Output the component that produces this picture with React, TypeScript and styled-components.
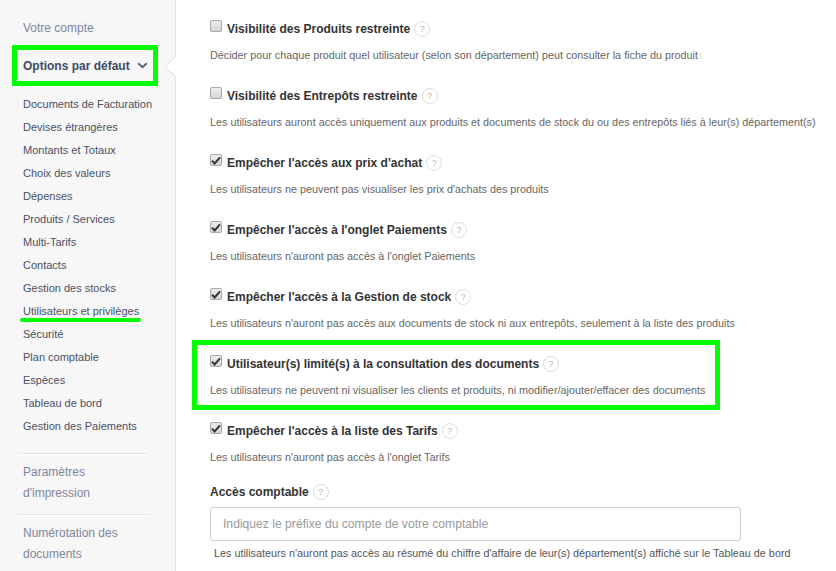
import React from 'react';
import styled, { createGlobalStyle } from 'styled-components';

const GlobalStyle = createGlobalStyle`
  html, body {
    margin: 0;
    padding: 0;
    height: 100%;
    background: #fff;
    overflow: hidden;
  }
  #root {
    height: 100%;
  }
`;

const Page = styled.div`
  display: flex;
  width: 836px;
  height: 571px;
  overflow: hidden;
  font-family: 'Liberation Sans', Arial, sans-serif;
  color: #333;
`;

const Sidebar = styled.nav`
  position: relative;
  flex: 0 0 176px;
  min-width: 0;
  box-sizing: border-box;
  padding: 18px 27px 0 18px;
  background: #f7f7f8;
  border-right: 1px solid #dfe3ea;
`;

const Notch = styled.span`
  position: absolute;
  top: 55px;
  right: -1px;
  width: 11px;
  height: 22px;
  overflow: hidden;

  &::before {
    content: '';
    position: absolute;
    top: 3px;
    left: 3px;
    width: 15px;
    height: 15px;
    background: #fff;
    border: 1px solid #dfe3ea;
    transform: rotate(45deg);
  }
`;

const SectionLink = styled.a`
  display: block;
  padding-left: 5px;
  font-size: 12px;
  line-height: 21px;
  color: #7d86a0;
`;

const ActiveSection = styled.div`
  position: relative;
  display: flex;
  align-items: center;
  gap: 7px;
  height: 41px;
  margin-top: 6px;
  padding-left: 5px;
  font-size: 12px;
  font-weight: 700;
  color: #3d4a63;
`;

const GreenBox = styled.div`
  position: absolute;
  box-sizing: border-box;
  border: 5px solid #00ff00;
  pointer-events: none;
`;

const SectionBox = styled(GreenBox)`
  top: 0;
  left: -6px;
  width: 146px;
  height: 41px;
`;

const SubList = styled.ul`
  list-style: none;
  margin: 7px 0 15px;
  padding: 0;
`;

const SubItem = styled.li`
  position: relative;
  padding-left: 5px;
  font-size: 11px;
  line-height: 23px;
  color: #4b5063;
  white-space: nowrap;
`;

const Underline = styled.span`
  position: absolute;
  left: 2px;
  top: 18px;
  width: 121px;
  height: 4px;
  border-radius: 2px;
  background: #00ff00;
`;

const Divider = styled.hr`
  margin: 10px 0 8px;
  border: 0;
  border-top: 1px solid #dfe3ea;
  box-shadow: 0 1px 0 #fff;
`;

const Main = styled.main`
  flex: 1;
  min-width: 0;
  padding: 18px 0 0 34px;
`;

const OptionRow = styled.section`
  position: relative;
  height: 67px;
`;

const OptionBox = styled(GreenBox)`
  top: -13px;
  left: -18px;
  width: 528px;
  height: 70px;
`;

const OptionHead = styled.label`
  display: flex;
  align-items: center;
  height: 22px;
  font-size: 12px;
  font-weight: 700;
  color: #333;
  white-space: nowrap;
`;

const CheckBox = styled.span`
  flex: 0 0 auto;
  box-sizing: border-box;
  display: flex;
  align-items: center;
  justify-content: center;
  width: 12px;
  height: 12px;
  margin: -6px 5px 0 0;
  border: 1px solid #a8a8a8;
  border-radius: 2px;
  background: linear-gradient(#ededed, #d5d5d5);
`;

const HelpBadge = styled.span`
  flex: 0 0 auto;
  box-sizing: border-box;
  display: inline-flex;
  align-items: center;
  justify-content: center;
  width: 16px;
  height: 16px;
  margin-left: 4px;
  border: 1px solid #dedede;
  border-radius: 50%;
  font-size: 9px;
  font-weight: 400;
  color: #b5b5b5;
`;

const OptionDesc = styled.p`
  margin: 8px 0 0;
  font-size: 10.8px;
  line-height: 14px;
  color: #666;
  white-space: nowrap;
`;

const DescMark = styled.span`
  display: inline-block;
  width: 1px;
  height: 7px;
  margin-left: 2px;
  background: #eadfd2;
`;

const FieldLabel = styled.div`
  display: flex;
  align-items: center;
  height: 18px;
  margin-top: -4px;
  font-size: 12px;
  font-weight: 700;
  color: #333;
`;

const TextField = styled.input`
  display: block;
  box-sizing: border-box;
  width: 531px;
  height: 34px;
  margin-top: 6px;
  padding: 0 12px;
  border: 1px solid #ccc;
  border-radius: 3px;
  font-family: inherit;
  font-size: 12.15px;
  outline: none;

  &::placeholder {
    color: #999;
    opacity: 1;
  }
`;

const FieldHint = styled.p`
  margin: 5px 0 0 4px;
  font-size: 10.8px;
  line-height: 14px;
  color: #555;
  white-space: nowrap;
`;

const submenu = [
  'Documents de Facturation',
  'Devises étrangères',
  'Montants et Totaux',
  'Choix des valeurs',
  'Dépenses',
  'Produits / Services',
  'Multi-Tarifs',
  'Contacts',
  'Gestion des stocks',
  'Utilisateurs et privilèges',
  'Sécurité',
  'Plan comptable',
  'Espèces',
  'Tableau de bord',
  'Gestion des Paiements',
];

const options = [
  {
    title: 'Visibilité des Produits restreinte',
    desc: 'Décider pour chaque produit quel utilisateur (selon son département) peut consulter la fiche du produit',
    checked: false,
    marked: true,
  },
  {
    title: 'Visibilité des Entrepôts restreinte',
    desc: 'Les utilisateurs auront accès uniquement aux produits et documents de stock du ou des entrepôts liés à leur(s) département(s)',
    checked: false,
  },
  {
    title: "Empêcher l'accès aux prix d'achat",
    desc: "Les utilisateurs ne peuvent pas visualiser les prix d'achats des produits",
    checked: true,
  },
  {
    title: "Empêcher l'accès à l'onglet Paiements",
    desc: "Les utilisateurs n'auront pas accès à l'onglet Paiements",
    checked: true,
  },
  {
    title: "Empêcher l'accès à la Gestion de stock",
    desc: "Les utilisateurs n'auront pas accès aux documents de stock ni aux entrepôts, seulement à la liste des produits",
    checked: true,
  },
  {
    title: 'Utilisateur(s) limité(s) à la consultation des documents',
    desc: 'Les utilisateurs ne peuvent ni visualiser les clients et produits, ni modifier/ajouter/effacer des documents',
    checked: true,
    highlighted: true,
  },
  {
    title: "Empêcher l'accès à la liste des Tarifs",
    desc: "Les utilisateurs n'auront pas accès à l'onglet Tarifs",
    checked: true,
  },
];

export default function App() {
  return (
    <Page>
      <GlobalStyle />
      <Sidebar>
        <Notch />
        <SectionLink>Votre compte</SectionLink>
        <ActiveSection>
          Options par défaut
          <svg width="11" height="7" viewBox="0 0 11 7" fill="none">
            <path d="M1.2 1.2 5.5 5.2 9.8 1.2" stroke="#5a6478" strokeWidth="2" />
          </svg>
          <SectionBox />
        </ActiveSection>
        <SubList>
          {submenu.map((item) => (
            <SubItem key={item}>
              {item}
              {item === 'Utilisateurs et privilèges' && <Underline />}
            </SubItem>
          ))}
        </SubList>
        <Divider />
        <SectionLink>Paramètres d'impression</SectionLink>
        <Divider />
        <SectionLink>Numérotation des documents</SectionLink>
      </Sidebar>
      <Main>
        {options.map((option) => (
          <OptionRow key={option.title}>
            {option.highlighted && <OptionBox />}
            <OptionHead>
              <CheckBox>
                {option.checked && (
                  <svg width="10" height="9" viewBox="0 0 10 9">
                    <path d="M1 4.6 3.6 7.4 9 1.4" fill="none" stroke="#333" strokeWidth="2" />
                  </svg>
                )}
              </CheckBox>
              {option.title}
              <HelpBadge>?</HelpBadge>
            </OptionHead>
            <OptionDesc>
              {option.desc}
              {option.marked && <DescMark />}
            </OptionDesc>
          </OptionRow>
        ))}
        <FieldLabel>
          Accès comptable
          <HelpBadge>?</HelpBadge>
        </FieldLabel>
        <TextField placeholder="Indiquez le préfixe du compte de votre comptable" />
        <FieldHint>
          Les utilisateurs n'auront pas accès au résumé du chiffre d'affaire de leur(s) département(s) affiché sur le Tableau de bord
        </FieldHint>
      </Main>
    </Page>
  );
}
